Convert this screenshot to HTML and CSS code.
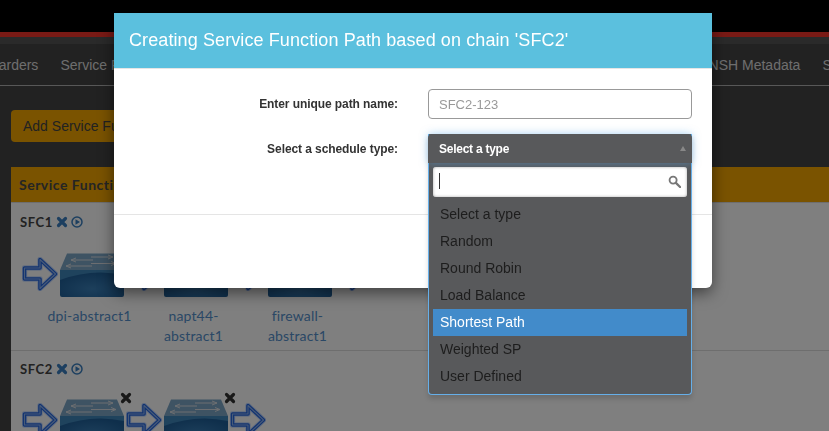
FILE: index.html
```html
<!DOCTYPE html>
<html lang="en">
<head>
<meta charset="utf-8">
<title>Creating Service Function Path</title>
<link rel="stylesheet" href="styles.css">
</head>
<body>
<svg class="defs" width="0" height="0" aria-hidden="true">
  <defs>
    <radialGradient id="front" cx=".5" cy=".7" r=".6">
      <stop offset="0" stop-color="#3a7fb8"/>
      <stop offset="1" stop-color="#1f5f98"/>
    </radialGradient>
    <symbol id="switch" viewBox="0 0 64 44">
      <path d="M7 .5H57L64 17H0Z" fill="#7da6c6"/>
      <path d="M0 17H64V42a2 2 0 0 1-2 2H2a2 2 0 0 1-2-2Z" fill="url(#front)"/>
      <path d="M0 17H64V22Q32 15 0 27Z" fill="#3f86ba"/>
      <path d="M31 4H53M53 4l-5-2M53 4l-5 2M11 7H33M11 7l5-2M11 7l5 2M31 10.500H56M56 10.500l-5-2M56 10.500l-5 2M6 13H32M6 13l5-2M6 13l5 2" fill="none" stroke="#d8dde2" stroke-width="1"/>
    </symbol>
    <symbol id="arrow" viewBox="0 0 36 34">
      <path d="M2.500 11H18V2.500L33.500 17 18 31.500V22H2.500Z" fill="none" stroke="#5a96ff" stroke-opacity=".35" stroke-width="5.500" stroke-linejoin="round"/>
      <path d="M2.500 11H18V2.500L33.500 17 18 31.500V22H2.500Z" fill="none" stroke="#2466e0" stroke-width="3.600" stroke-linejoin="round"/>
      <path d="M2.500 11H18V2.500L33.500 17 18 31.500V22H2.500Z" fill="none" stroke="#8fb4f0" stroke-width="1.100" stroke-linejoin="round"/>
    </symbol>
    <symbol id="cross" viewBox="0 0 12 12">
      <path d="M2.500 2.500 9.500 9.500M9.500 2.500 2.500 9.500" fill="none" stroke="currentColor" stroke-width="3.200" stroke-linecap="round"/>
    </symbol>
    <symbol id="play" viewBox="0 0 12 12">
      <circle cx="6" cy="6" r="5" fill="none" stroke="currentColor" stroke-width="1.500"/>
      <path d="M4.500 3.200 9 6 4.500 8.800Z" fill="currentColor"/>
    </symbol>
  </defs>
</svg>

<div class="page">
  <div class="topbar"></div>
  <div class="redline"></div>
  <div class="subbar"></div>
  <nav class="nav">
    <div class="nav-group nav-left">
      <a>Service Forwarders</a>
      <a>Service Function Chains</a>
    </div>
    <div class="nav-group nav-right">
      <a>NSH Metadata</a>
      <a>Settings</a>
    </div>
  </nav>
  <main class="content">
    <button class="add-btn" type="button">Add Service Function Chain</button>
    <section class="panel">
      <h2 class="panel-head">Service Function Chains</h2>
      <div class="chain chain-first">
        <h3 class="chain-title">SFC1
          <svg class="act"><use href="#cross"/></svg>
          <svg class="act"><use href="#play"/></svg>
        </h3>
        <div class="flow">
          <svg class="arrow"><use href="#arrow"/></svg>
          <div class="node"><svg class="switch"><use href="#switch"/></svg><span class="node-name">dpi-abstract1</span></div>
          <svg class="arrow"><use href="#arrow"/></svg>
          <div class="node"><svg class="switch"><use href="#switch"/></svg><span class="node-name">napt44-<br>abstract1</span></div>
          <svg class="arrow"><use href="#arrow"/></svg>
          <div class="node"><svg class="switch"><use href="#switch"/></svg><span class="node-name">firewall-<br>abstract1</span></div>
          <svg class="arrow"><use href="#arrow"/></svg>
        </div>
      </div>
      <div class="chain chain-second">
        <h3 class="chain-title">SFC2
          <svg class="act"><use href="#cross"/></svg>
          <svg class="act"><use href="#play"/></svg>
        </h3>
        <div class="flow">
          <svg class="arrow"><use href="#arrow"/></svg>
          <div class="node"><svg class="switch"><use href="#switch"/></svg><svg class="del"><use href="#cross"/></svg></div>
          <svg class="arrow"><use href="#arrow"/></svg>
          <div class="node"><svg class="switch"><use href="#switch"/></svg><svg class="del"><use href="#cross"/></svg></div>
          <svg class="arrow"><use href="#arrow"/></svg>
        </div>
      </div>
    </section>
  </main>
</div>

<div class="backdrop"></div>

<div class="modal">
  <header class="modal-head">
    <h1 class="modal-title">Creating Service Function Path based on chain 'SFC2'</h1>
  </header>
  <form class="modal-body">
    <label class="form-label">Enter unique path name:</label>
    <input class="text-input" type="text" placeholder="SFC2-123">
    <label class="form-label">Select a schedule type:</label>
    <div class="select-anchor"></div>
  </form>
  <footer class="modal-foot"></footer>
</div>

<div class="dropdown">
  <div class="drop-head">
    <span>Select a type</span>
    <i class="caret"></i>
  </div>
  <div class="search">
    <span class="cursor"></span>
    <svg class="search-icon" viewBox="0 0 14 14"><circle cx="5.500" cy="5.500" r="3.800" fill="none" stroke="#777" stroke-width="2"/><path d="M8.500 8.500 13 13" stroke="#777" stroke-width="2.400" stroke-linecap="round"/></svg>
  </div>
  <ul class="options">
    <li>Select a type</li>
    <li>Random</li>
    <li>Round Robin</li>
    <li>Load Balance</li>
    <li class="is-active">Shortest Path</li>
    <li>Weighted SP</li>
    <li>User Defined</li>
  </ul>
</div>
</body>
</html>
```
FILE: styles.css
```css
* { box-sizing: border-box; }
html, body { margin: 0; height: 100%; overflow: hidden; }
body { background: #444; font-family: "Liberation Sans", Arial, sans-serif; color: #333; }
.defs { position: absolute; }

.page { height: 431px; overflow: hidden; display: flex; flex-direction: column; }
.topbar { height: 32px; background: #000; flex: none; }
.redline { height: 5px; background: #f2342a; flex: none; }
.subbar { height: 7px; background: #555; flex: none; }
.nav { height: 42px; flex: none; display: flex; justify-content: space-between; align-items: center; border-bottom: 1px solid #b0b0b0; background: #444; font-size: 14px; color: #ddd; }
.nav-group { display: flex; gap: 22px; white-space: nowrap; }
.nav-left { margin-left: -83px; }
.nav-right { margin-right: -44px; }

.content { padding: 24px 0 0 11px; flex: 1; min-height: 0; }
.add-btn { display: block; height: 32px; width: 220px; padding: 0 12px; border: 0; border-radius: 4px; background: #f4a700; color: #444; font: 14px "Liberation Sans", Arial, sans-serif; text-align: left; }
.panel { margin-top: 25px; margin-right: -4px; background: #fff; }
.panel-head { margin: 0; height: 36px; padding-left: 8px; background: #f4a700; color: #4a4a4a; font: bold 14px/36px Lato, sans-serif; letter-spacing: .5px; border-bottom: 1px solid #ddd; }
.chain { padding: 10px 0 0 11px; }
.chain-first { height: 148px; border-bottom: 1px solid #ddd; }
.chain-second { padding-top: 9px; }
.chain-title { margin: 0; height: 18px; display: flex; align-items: center; gap: 3px; font: bold 13px/18px Lato, sans-serif; letter-spacing: .6px; color: #444; margin-left: -2px; }
.chain-title .act { width: 12px; height: 12px; color: #3a7fc0; }
.chain-title .act:first-of-type { margin-left: 0; }
.flow { display: flex; align-items: flex-start; margin-top: 21px; }
.chain-first .flow { margin-top: 22px; }
.arrow { width: 36px; height: 34px; margin: 4px 0 0 0; flex: none; }
.node { position: relative; width: 64px; margin: 0 2px; flex: none; display: flex; flex-direction: column; align-items: center; }
.switch { width: 64px; height: 44px; }
.node-name { margin: 9px 5px 0 0; width: 100px; text-align: center; font: 14px/20px Lato, sans-serif; letter-spacing: .15px; color: #5590cc; }
.del { position: absolute; top: -7px; right: -8px; width: 12px; height: 12px; color: #333; }

.backdrop { position: fixed; inset: 0; background: rgba(0,0,0,.5); }

.modal { position: absolute; left: 114px; top: 13px; width: 598px; height: 275px; background: #fff; border-radius: 0 0 6px 6px; box-shadow: 0 5px 15px rgba(0,0,0,.5); display: flex; flex-direction: column; }
.modal-head { height: 56px; flex: none; background: #5bc0de; border-bottom: 1px solid #e5e5e5; padding: 0 15px; display: flex; align-items: center; }
.modal-title { margin: 0; font-size: 18px; font-weight: 400; letter-spacing: .1px; color: #fff; white-space: nowrap; }
.modal-body { flex: none; height: 146px; padding: 20px 20px 0 0; display: grid; grid-template-columns: 284px 264px; column-gap: 30px; grid-template-rows: 30px 30px; row-gap: 15px; border-bottom: 1px solid #e5e5e5; }
.form-label { font-size: 12px; font-weight: 700; letter-spacing: -.08px; color: #333; text-align: right; line-height: 30px; }
.text-input { width: 264px; height: 30px; border: 1px solid #999; border-radius: 4px; padding: 0 10px; font: 13px "Liberation Sans", Arial, sans-serif; color: #555; outline: 0; }
.text-input::placeholder { color: #999; opacity: 1; }
.modal-foot { flex: 1; }

.dropdown { position: absolute; left: 428px; top: 134px; width: 264px; height: 261px; background: #58595b; border: 1px solid #66afe9; border-top: 0; border-radius: 0 0 4px 4px; box-shadow: 0 4px 5px rgba(0,0,0,.15); display: flex; flex-direction: column; }
.drop-head { height: 29px; flex: none; margin: 0 -1px; background: #58595b; border-radius: 4px 4px 0 0; display: flex; align-items: center; justify-content: space-between; padding: 0 6px 0 11px; color: #fff; font-size: 12px; font-weight: 700; letter-spacing: -.25px; box-shadow: 0 0 8px rgba(82,168,236,.5); }
.caret { width: 0; height: 0; border-left: 3.500px solid transparent; border-right: 3.500px solid transparent; border-bottom: 5px solid #888; }
.search { margin: 4px 4px 0; height: 30px; flex: none; background: #fff; border-radius: 3px; box-shadow: inset 0 0 3px #aaa; display: flex; align-items: center; justify-content: space-between; padding: 0 6px 2px 6px; }
.cursor { width: 1px; height: 16px; background: #333; }
.search-icon { width: 13px; height: 13px; }
.options { list-style: none; margin: 4px 4px 0; padding: 0; }
.options li { height: 27px; line-height: 27px; padding-left: 7px; font-size: 14px; color: #1d1d1d; }
.options .is-active { background: #428bca; color: #fff; }
```
